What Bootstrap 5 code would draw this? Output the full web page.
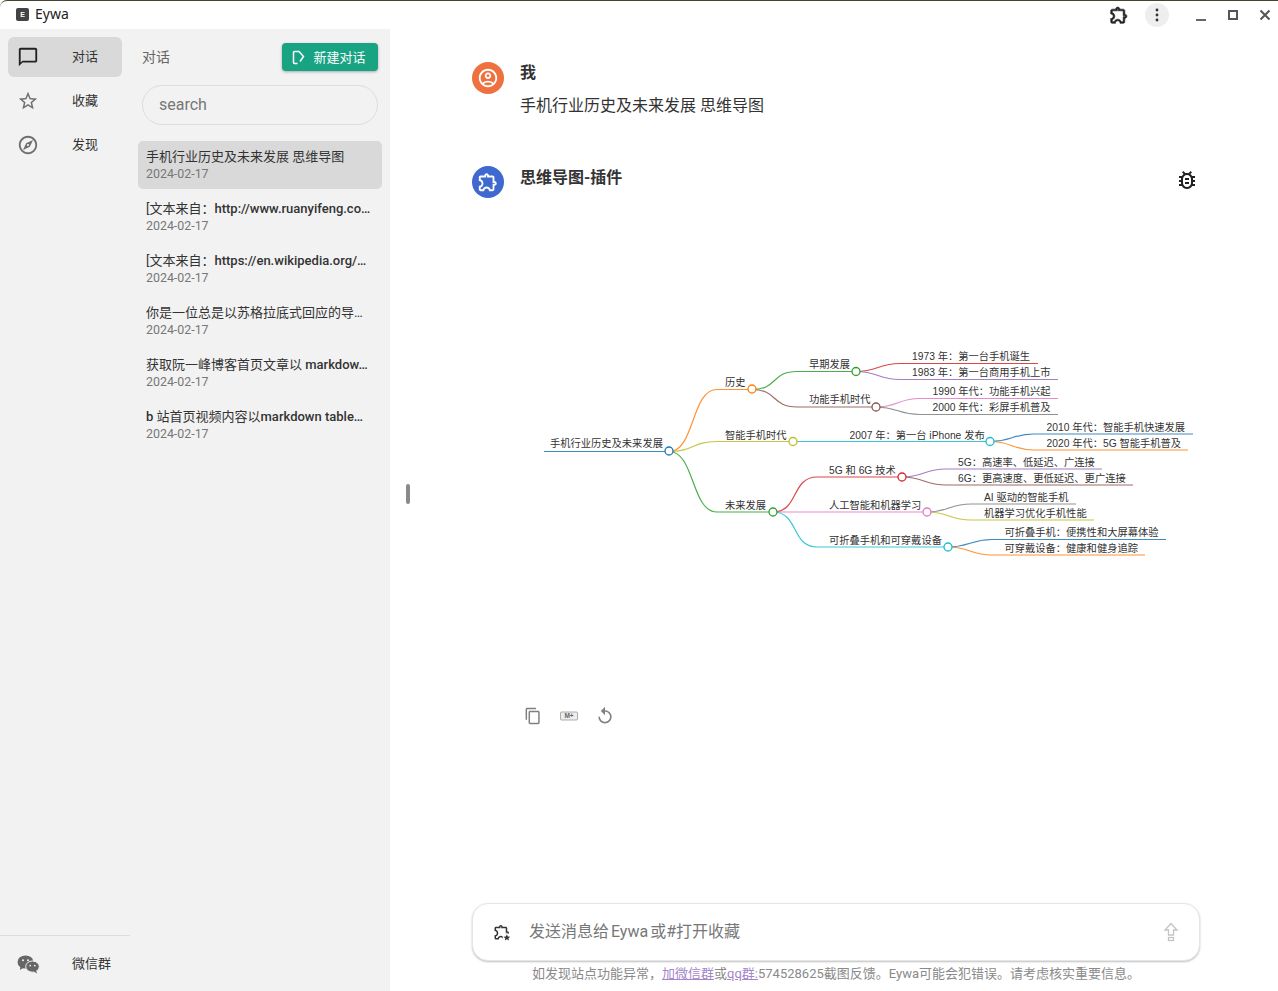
<!DOCTYPE html>
<html lang="zh">
<head>
<meta charset="utf-8">
<title>Eywa</title>
<link href="https://cdn.jsdelivr.net/npm/bootstrap@5.3.0/dist/css/bootstrap.min.css" rel="stylesheet">
<style>
html,body{height:100%;overflow:hidden;margin:0}
body{font-family:Roboto,"Noto Sans CJK SC",sans-serif;background:#fff;color:#333}
.app-frame{height:991px;border-top:1px solid #45452f;border-top-left-radius:7px}
.title-strip{height:28px;padding-left:16px;padding-right:5px}
.app-logo{width:13px;height:13px;background:#444;color:#fff;font:700 7px/13px "Liberation Sans",sans-serif;text-align:center;border-radius:2px;margin-right:6px;margin-top:-2px}
.app-name{font:14px/18px "Noto Sans",sans-serif;color:#222;margin-top:-2px}
.win-group{margin-right:-8px}
.win-ic{width:32px;height:28px;display:flex;align-items:center;justify-content:center;color:#555}
.ext-ic{margin-right:10px;color:#222}
.ext-ic svg{stroke:#222;stroke-width:.7}
.kebab-ic{width:24px;height:24px;border-radius:50%;background:#eee;margin-right:16px;color:#333}
.body-row{height:962px}
.side-area{width:390px;background:#f2f2f2;flex:none}
.rail-col{width:130px;flex:none;padding-top:8px}
.rail-item{height:40px;margin:0 8px 4px;padding-left:9px;border-radius:6px;font-size:13px;color:#333}
.rail-item svg{width:22px;height:22px;fill:#6e6e6e;flex:none}
.rail-item span{margin-left:33px}
.rail-on{background:#d9d9d9}
.rail-on svg{fill:#222}
.rail-foot{border-top:1px solid #ddd;height:56px;margin-top:auto;padding-left:17px;font-size:13px;color:#333}
.rail-foot span{margin-left:32px}
.list-col{width:260px;flex:none;padding:14px 8px 0}
.list-head{height:28px;padding:0 4px;margin-bottom:14px}
.list-title{font-size:14px;color:#666}
.new-btn{width:96px;height:28px;background:#18a383;color:#fff;border:0;border-radius:4px;font-size:13px;box-shadow:0 1px 3px rgba(0,0,0,.3);padding:1px 2px 0 0}
.new-btn:hover{background:#18a383;color:#fff}
.search-pill{height:40px;width:236px;margin:0 4px 16px;border:1px solid #ddd;border-radius:20px;padding:0 0 2px 16px;font-size:16px;color:#777;background:transparent}
.search-pill::placeholder{color:#777}
.chat-row{height:48px;margin-bottom:4px;padding:7px 8px 0;border-radius:5px}
.chat-on{background:#d9d9d9}
.chat-name{font-size:13px;line-height:17px;color:#333;white-space:nowrap}
.chat-name b{font-weight:500}
.chat-date{font-size:12.4px;line-height:15px;color:#777;margin-top:1px}
.main-col{padding:0 78px 0 82px;position:relative}
.grip-bar{position:absolute;left:16px;top:455px;width:4px;height:20px;border-radius:2px;background:#8a8a8a}
.msg-one{margin-top:32px;height:104px}
.who-disc{width:32px;height:32px;border-radius:50%;flex:none;margin-top:1px}
.disc-user{background:#ef7140}
.disc-plugin{background:#3f69cf}
.who-disc svg{width:22px;height:22px;fill:#fff}
.who-name{font-size:16px;font-weight:700;line-height:24px;color:#333;margin-left:16px}
.who-head{margin-top:1px}
.who-text{font-size:16px;line-height:24px;color:#333;margin-top:9px;margin-left:16px}
.bug-ic{width:24px;height:24px;fill:#222;margin-top:3px;margin-right:1px}
.map-svg{display:block;width:680px;height:490px;margin:2px 0 0 48px}
.map-svg text{font-family:"Liberation Sans","Noto Sans CJK SC",sans-serif;font-size:10.27px;fill:#333}
.map-svg path{fill:none;stroke-width:1.2;stroke-opacity:.85}
.map-svg circle{fill:#fff;stroke-width:1.3}
.act-row{margin:16px 0 0 51px;gap:16px}
.act-row svg{width:20px;height:20px;fill:#808080}
.input-shell{height:58px;border:1px solid #e6e6e6;border-radius:16px;box-shadow:0 1px 2px rgba(0,0,0,.25);padding:0 20px;margin-top:auto;background:#fff}
.input-shell svg{flex:none}
.input-ph{font-size:16px;color:#777;margin-left:18px;word-spacing:-2px}
.foot-note{height:30px;font-size:13px;line-height:25px;color:#8a8a8a;text-align:center;white-space:nowrap}
.foot-note a{color:#a585c9}
</style>
</head>
<body>
<div class="app-frame d-flex flex-column">
  <div class="title-strip d-flex align-items-center">
    <div class="app-logo">E</div>
    <div class="app-name">Eywa</div>
    <div class="win-group ms-auto d-flex align-items-center">
      <div class="win-ic ext-ic"><svg width="20" height="20" viewBox="0 0 24 24" fill="currentColor"><path d="M10.5 4.5c.28 0 .5.22.5.5v2h6v6h2c.28 0 .5.22.5.5s-.22.5-.5.5h-2v6h-2.12c-.68-1.75-2.39-3-4.38-3s-3.7 1.25-4.38 3H4v-2.12c1.75-.68 3-2.39 3-4.38 0-1.99-1.24-3.7-2.99-4.38L4 7h6V5c0-.28.22-.5.5-.5m0-2C9.12 2.5 8 3.62 8 5H4c-1.1 0-1.99.9-1.99 2v3.8h.29c1.49 0 2.7 1.21 2.7 2.7s-1.21 2.7-2.7 2.7H2V20c0 1.1.9 2 2 2h3.8v-.3c0-1.49 1.21-2.7 2.7-2.7s2.7 1.21 2.7 2.7v.3H17c1.1 0 2-.9 2-2v-4c1.38 0 2.5-1.12 2.5-2.5S20.38 11 19 11V7c0-1.1-.9-2-2-2h-4c0-1.38-1.12-2.5-2.5-2.5z"/></svg></div>
      <div class="kebab-ic d-flex align-items-center justify-content-center"><svg width="4" height="14" viewBox="0 0 4 14" fill="currentColor"><circle cx="2" cy="2" r="1.4"/><circle cx="2" cy="7" r="1.4"/><circle cx="2" cy="12" r="1.4"/></svg></div>
      <div class="win-ic"><svg width="12" height="12" viewBox="0 0 12 12" stroke="#666" stroke-width="2" fill="none"><path d="M1 11h10"/></svg></div>
      <div class="win-ic"><svg width="12" height="12" viewBox="0 0 12 12" stroke="#555" stroke-width="2" fill="none"><rect x="2" y="2" width="8" height="8"/></svg></div>
      <div class="win-ic"><svg width="12" height="12" viewBox="0 0 12 12" stroke="#555" stroke-width="2" fill="none"><path d="M1.5 1.5l9 9M10.5 1.5l-9 9"/></svg></div>
    </div>
  </div>

  <div class="body-row d-flex">
    <div class="side-area d-flex">
      <div class="rail-col d-flex flex-column">
        <div class="rail-item rail-on d-flex align-items-center"><svg viewBox="0 0 24 24"><path d="M20 2H4c-1.1 0-2 .9-2 2v18l4-4h14c1.1 0 2-.9 2-2V4c0-1.1-.9-2-2-2zm0 14H6l-2 2V4h16v12z"/></svg><span>对话</span></div>
        <div class="rail-item d-flex align-items-center"><svg viewBox="0 0 24 24"><path d="M22 9.24l-7.19-.62L12 2 9.19 8.63 2 9.24l5.46 4.73L5.82 21 12 17.27 18.18 21l-1.63-7.03L22 9.24zM12 15.4l-3.76 2.27 1-4.28-3.32-2.88 4.38-.38L12 6.1l1.71 4.04 4.38.38-3.32 2.88 1 4.28L12 15.4z"/></svg><span>收藏</span></div>
        <div class="rail-item d-flex align-items-center"><svg viewBox="0 0 24 24"><path d="M12 2C6.48 2 2 6.48 2 12s4.48 10 10 10 10-4.48 10-10S17.52 2 12 2zm0 18c-4.41 0-8-3.59-8-8s3.59-8 8-8 8 3.59 8 8-3.59 8-8 8zm-5.5-2.5l7.51-3.49L17.5 6.5 9.99 9.99 6.5 17.5zm5.5-6.6c.61 0 1.1.49 1.1 1.1s-.49 1.1-1.1 1.1-1.1-.49-1.1-1.1.49-1.1 1.1-1.1z"/></svg><span>发现</span></div>
        <div class="rail-foot d-flex align-items-center">
          <svg width="23" height="20" viewBox="0 0 23 20" fill="#666"><ellipse cx="8.5" cy="8" rx="8" ry="6.6"/><path d="M3.5 12l-.6 4 4-2.4z"/><ellipse cx="15.5" cy="12.6" rx="6.8" ry="5.6" stroke="#f2f2f2"/><path d="M19 16.5l1.2 3-3.6-2z"/><circle cx="6" cy="6.2" r="1" fill="#f2f2f2"/><circle cx="11" cy="6.2" r="1" fill="#f2f2f2"/><circle cx="13.2" cy="11.6" r=".9" fill="#f2f2f2"/><circle cx="17.8" cy="11.6" r=".9" fill="#f2f2f2"/></svg>
          <span>微信群</span>
        </div>
      </div>
      <div class="list-col">
        <div class="list-head d-flex align-items-center justify-content-between">
          <span class="list-title">对话</span>
          <button class="btn new-btn d-flex align-items-center justify-content-center gap-2"><svg width="13" height="15" viewBox="0 0 13 15" fill="none" stroke="#fff" stroke-width="1.5"><path d="M5.5 13.5H2.5a1 1 0 0 1-1-1v-10a1 1 0 0 1 1-1H7l4.5 5L8 11.5"/></svg>新建对话</button>
        </div>
        <input class="search-pill d-block" placeholder="search">
        <div class="chat-row chat-on"><div class="chat-name">手机行业历史及未来发展 思维导图</div><div class="chat-date">2024-02-17</div></div>
        <div class="chat-row"><div class="chat-name">[文本来自：<b>http://www.ruanyifeng.co…</b></div><div class="chat-date">2024-02-17</div></div>
        <div class="chat-row"><div class="chat-name">[文本来自：<b>https://en.wikipedia.org/…</b></div><div class="chat-date">2024-02-17</div></div>
        <div class="chat-row"><div class="chat-name">你是一位总是以苏格拉底式回应的导…</div><div class="chat-date">2024-02-17</div></div>
        <div class="chat-row"><div class="chat-name">获取阮一峰博客首页文章以 <b>markdow…</b></div><div class="chat-date">2024-02-17</div></div>
        <div class="chat-row"><div class="chat-name"><b>b</b> 站首页视频内容以<b>markdown table…</b></div><div class="chat-date">2024-02-17</div></div>
      </div>
    </div>

    <div class="main-col flex-grow-1 d-flex flex-column">
      <div class="grip-bar"></div>
      <div class="msg-one d-flex">
        <div class="who-disc disc-user d-flex align-items-center justify-content-center"><svg viewBox="0 0 24 24"><path d="M12 2C6.48 2 2 6.48 2 12s4.48 10 10 10 10-4.48 10-10S17.52 2 12 2zM7.35 18.5C8.66 17.56 10.26 17 12 17s3.34.56 4.65 1.5c-1.31.94-2.91 1.5-4.65 1.5s-3.34-.56-4.65-1.5zm10.79-1.38C16.45 15.8 14.32 15 12 15s-4.45.8-6.14 2.12C4.7 15.73 4 13.95 4 12c0-4.42 3.58-8 8-8s8 3.58 8 8c0 1.95-.7 3.73-1.86 5.12zM12 6c-1.93 0-3.5 1.57-3.5 3.5S10.07 13 12 13s3.5-1.57 3.5-3.5S13.93 6 12 6zm0 5c-.83 0-1.5-.67-1.5-1.5S11.17 8 12 8s1.5.67 1.5 1.5S12.83 11 12 11z"/></svg></div>
        <div><div class="who-name">我</div><div class="who-text">手机行业历史及未来发展 思维导图</div></div>
      </div>
      <div class="d-flex">
        <div class="who-disc disc-plugin d-flex align-items-center justify-content-center"><svg viewBox="0 0 24 24"><path d="M10.5 4.5c.28 0 .5.22.5.5v2h6v6h2c.28 0 .5.22.5.5s-.22.5-.5.5h-2v6h-2.12c-.68-1.75-2.39-3-4.38-3s-3.7 1.25-4.38 3H4v-2.12c1.75-.68 3-2.39 3-4.38 0-1.99-1.24-3.7-2.99-4.38L4 7h6V5c0-.28.22-.5.5-.5m0-2C9.12 2.5 8 3.62 8 5H4c-1.1 0-1.99.9-1.99 2v3.8h.29c1.49 0 2.7 1.21 2.7 2.7s-1.21 2.7-2.7 2.7H2V20c0 1.1.9 2 2 2h3.8v-.3c0-1.49 1.21-2.7 2.7-2.7s2.7 1.21 2.7 2.7v.3H17c1.1 0 2-.9 2-2v-4c1.38 0 2.5-1.12 2.5-2.5S20.38 11 19 11V7c0-1.1-.9-2-2-2h-4c0-1.38-1.12-2.5-2.5-2.5z"/></svg></div>
        <div class="who-name who-head">思维导图-插件</div>
        <svg class="bug-ic ms-auto" viewBox="0 0 24 24"><path d="M20 8h-2.81c-.45-.78-1.07-1.45-1.82-1.96L17 4.41 15.59 3l-2.17 2.17C12.96 5.06 12.49 5 12 5c-.49 0-.96.06-1.41.17L8.41 3 7 4.41l1.62 1.63C7.88 6.55 7.26 7.22 6.81 8H4v2h2.09c-.05.33-.09.66-.09 1v1H4v2h2v1c0 .34.04.67.09 1H4v2h2.81c1.04 1.79 2.97 3 5.19 3s4.15-1.21 5.19-3H20v-2h-2.09c.05-.33.09-.66.09-1v-1h2v-2h-2v-1c0-.34-.04-.67-.09-1H20V8zm-4 7c0 2.21-1.79 4-4 4s-4-1.79-4-4v-4c0-2.21 1.79-4 4-4s4 1.79 4 4v4zm-6-1h4v2h-4zm0-4h4v2h-4z"/></svg>
      </div>
      <svg class="map-svg" viewBox="520 200 680 490">
        <path stroke="#1f77b4" d="M544 451.5H669"/>
        <path stroke="#ff7f0e" d="M669 451.5C695 451.5 691 389.5 717 389.5H752"/>
        <path stroke="#bcbd22" d="M669 451.5C695 451.5 691 441.5 717 441.5H793"/>
        <path stroke="#2ca02c" d="M669 451.5C695 451.5 691 512 717 512H773"/>
        <path stroke="#2ca02c" d="M752 389.5C778 389.5 771 371.5 797 371.5H856"/>
        <path stroke="#8c564b" d="M752 389.5C778 389.5 771 407 797 407H876"/>
        <path stroke="#17becf" d="M793 441.5H990"/>
        <path stroke="#d62728" d="M773 512C799 512 791 477 817 477H902"/>
        <path stroke="#e377c2" d="M773 512H927"/>
        <path stroke="#17becf" d="M773 512C799 512 791 547 817 547H948"/>
        <path stroke="#d62728" d="M856 371.5C878 371.5 878 363.5 900 363.5H1038"/>
        <path stroke="#9467bd" d="M856 371.5C878 371.5 878 379.5 900 379.5H1058"/>
        <path stroke="#e377c2" d="M876 407C898 407 898 398.5 920 398.5H1058"/>
        <path stroke="#7f7f7f" d="M876 407C898 407 898 414.5 920 414.5H1058"/>
        <path stroke="#1f77b4" d="M990 441.5C1012 441.5 1012 434 1034 434H1193"/>
        <path stroke="#ff7f0e" d="M990 441.5C1012 441.5 1012 450 1034 450H1188"/>
        <path stroke="#9467bd" d="M902 477C924 477 924 469 946 469H1102"/>
        <path stroke="#8c564b" d="M902 477C924 477 924 485 946 485H1133"/>
        <path stroke="#7f7f7f" d="M927 512C949 512 949 504 971 504H1076"/>
        <path stroke="#bcbd22" d="M927 512C949 512 949 520 971 520H1094"/>
        <path stroke="#1f77b4" d="M948 547C970 547 970 539.5 992 539.5H1166"/>
        <path stroke="#ff7f0e" d="M948 547C970 547 970 555 992 555H1145"/>
        <circle cx="669" cy="451" r="4" stroke="#1f77b4"/>
        <circle cx="752" cy="389" r="4" stroke="#ff7f0e"/>
        <circle cx="793" cy="441.5" r="4" stroke="#bcbd22"/>
        <circle cx="773" cy="512" r="4" stroke="#2ca02c"/>
        <circle cx="856" cy="371.5" r="4" stroke="#2ca02c"/>
        <circle cx="876" cy="407" r="4" stroke="#8c564b"/>
        <circle cx="990" cy="441.5" r="4" stroke="#17becf"/>
        <circle cx="902" cy="477" r="4" stroke="#d62728"/>
        <circle cx="927" cy="512" r="4" stroke="#e377c2"/>
        <circle cx="948" cy="547" r="4" stroke="#17becf"/>
        <text x="550" y="447">手机行业历史及未来发展</text>
        <text x="725" y="386">历史</text>
        <text x="725" y="439">智能手机时代</text>
        <text x="725" y="509">未来发展</text>
        <text x="809" y="368">早期发展</text>
        <text x="809" y="403">功能手机时代</text>
        <text x="849.5" y="439">2007 年：第一台 iPhone 发布</text>
        <text x="829" y="474">5G 和 6G 技术</text>
        <text x="829" y="509">人工智能和机器学习</text>
        <text x="829" y="544">可折叠手机和可穿戴设备</text>
        <text x="912" y="360">1973 年：第一台手机诞生</text>
        <text x="912" y="376">1983 年：第一台商用手机上市</text>
        <text x="932.5" y="395">1990 年代：功能手机兴起</text>
        <text x="932.5" y="411">2000 年代：彩屏手机普及</text>
        <text x="1046.5" y="431">2010 年代：智能手机快速发展</text>
        <text x="1046.5" y="447">2020 年代：5G 智能手机普及</text>
        <text x="958" y="466">5G：高速率、低延迟、广连接</text>
        <text x="958" y="482">6G：更高速度、更低延迟、更广连接</text>
        <text x="984" y="501">AI 驱动的智能手机</text>
        <text x="984" y="517">机器学习优化手机性能</text>
        <text x="1004.5" y="536">可折叠手机：便携性和大屏幕体验</text>
        <text x="1004.5" y="552">可穿戴设备：健康和健身追踪</text>
      </svg>
      <div class="act-row d-flex align-items-center">
        <svg viewBox="-1.5 -1.5 27 27"><path d="M16 1H4c-1.1 0-2 .9-2 2v14h2V3h12V1zm3 4H8c-1.1 0-2 .9-2 2v14c0 1.1.9 2 2 2h11c1.1 0 2-.9 2-2V7c0-1.1-.9-2-2-2zm0 16H8V7h11v14z"/></svg>
        <svg viewBox="0 0 20 20"><rect x="1.5" y="6" width="17" height="8" rx="1" fill="#eee" stroke="#999" stroke-width=".8"/><text x="10" y="12.4" text-anchor="middle" font-family="Liberation Sans" font-size="6.5" font-weight="700" fill="#666">M+</text></svg>
        <svg viewBox="0 0 24 24"><path d="M12 5V1L7 6l5 5V7c3.31 0 6 2.69 6 6s-2.69 6-6 6-6-2.69-6-6H4c0 4.42 3.58 8 8 8s8-3.58 8-8-3.58-8-8-8z"/></svg>
      </div>
      <div class="input-shell d-flex align-items-center">
        <svg width="18" height="18" viewBox="0 0 24 24" fill="#333"><path d="M10.5 4.5c.28 0 .5.22.5.5v2h6v6h2c.28 0 .5.22.5.5s-.22.5-.5.5h-2v6h-2.12c-.68-1.75-2.39-3-4.38-3s-3.7 1.25-4.38 3H4v-2.12c1.75-.68 3-2.39 3-4.38 0-1.99-1.24-3.7-2.99-4.38L4 7h6V5c0-.28.22-.5.5-.5m0-2C9.12 2.5 8 3.62 8 5H4c-1.1 0-1.99.9-1.99 2v3.8h.29c1.49 0 2.7 1.21 2.7 2.7s-1.21 2.7-2.7 2.7H2V20c0 1.1.9 2 2 2h3.8v-.3c0-1.49 1.21-2.7 2.7-2.7s2.7 1.21 2.7 2.7v.3H17c1.1 0 2-.9 2-2v-4c1.38 0 2.5-1.12 2.5-2.5S20.38 11 19 11V7c0-1.1-.9-2-2-2h-4c0-1.38-1.12-2.5-2.5-2.5z"/><path fill="#fff" d="M13 14h10v10H13z"/><path d="M18.5 15l1.3 2.9 3.2.3-2.4 2.1.7 3.1-2.8-1.6-2.8 1.6.7-3.1-2.4-2.1 3.2-.3z"/></svg>
        <div class="input-ph">发送消息给 Eywa 或#打开收藏</div>
        <svg class="ms-auto" width="16" height="20" viewBox="0 0 16 20" fill="none" stroke="#c4c4c4" stroke-width="1.3"><path d="M8 1.5L2 8h3.5v5h5V8H14z"/><rect x="5.5" y="15.5" width="5" height="3"/></svg>
      </div>
      <div class="foot-note">如发现站点功能异常，<a href="#">加微信群</a>或<a href="#">qq群:</a>574528625截图反馈。Eywa可能会犯错误。请考虑核实重要信息。</div>
    </div>
  </div>
</div>
<script src="https://cdn.jsdelivr.net/npm/bootstrap@5.3.0/dist/js/bootstrap.bundle.min.js"></script>
</body>
</html>
